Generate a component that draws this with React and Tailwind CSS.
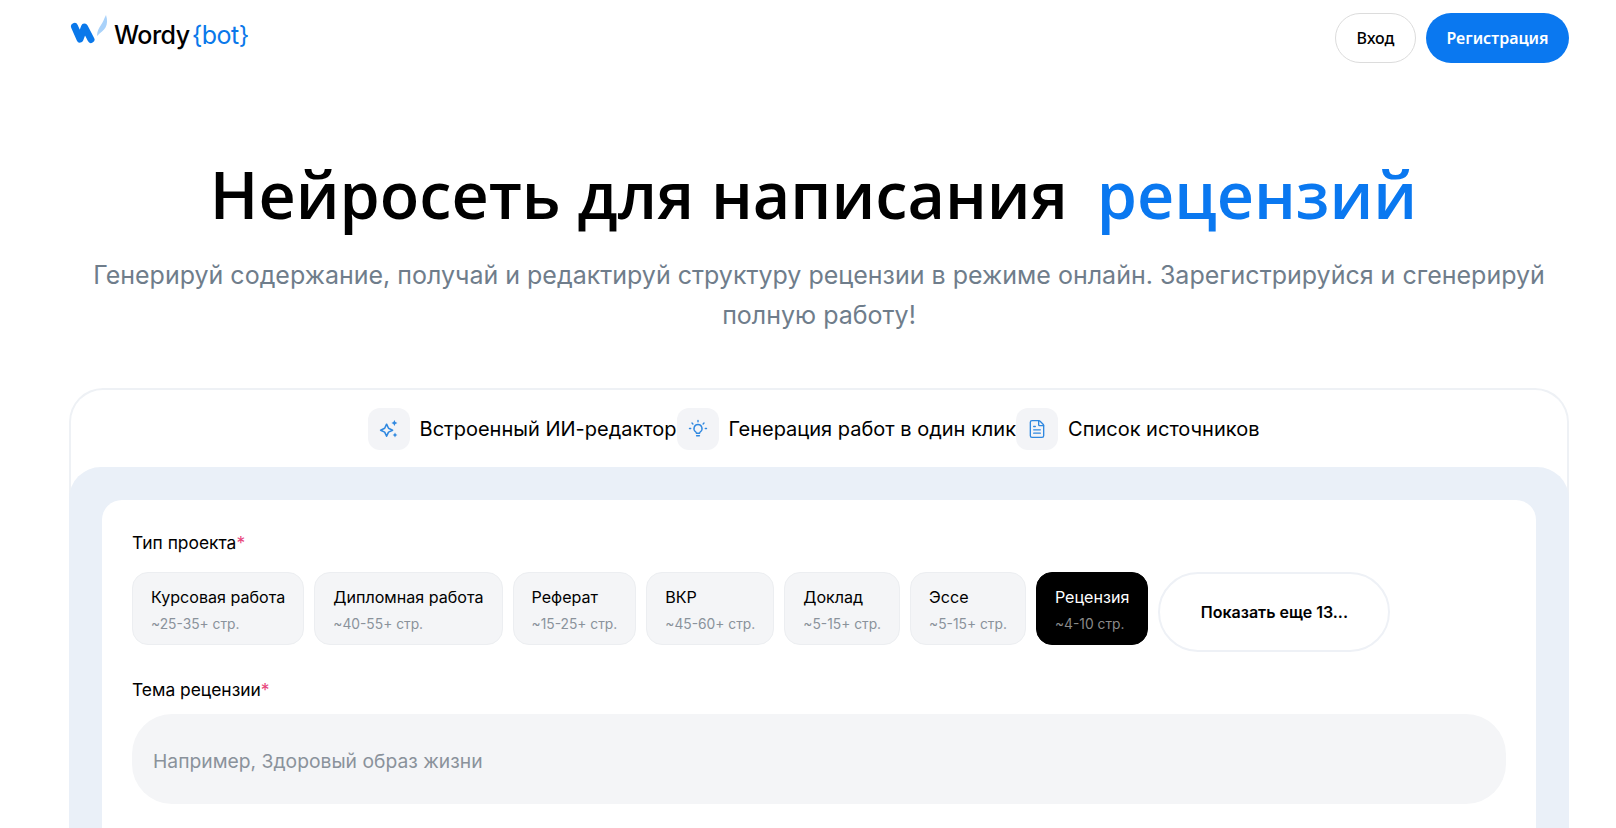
import { FileText } from 'lucide-react'

const PROJECT_TYPES = [
  { name: 'Курсовая работа', pages: '~25-35+ стр.' },
  { name: 'Дипломная работа', pages: '~40-55+ стр.' },
  { name: 'Реферат', pages: '~15-25+ стр.' },
  { name: 'ВКР', pages: '~45-60+ стр.' },
  { name: 'Доклад', pages: '~5-15+ стр.' },
  { name: 'Эссе', pages: '~5-15+ стр.' },
  { name: 'Рецензия', pages: '~4-10 стр.', active: true },
]

function SparkIcon() {
  return (
    <svg width="24" height="24" viewBox="0 0 20 20" fill="none" className="text-[#2f88e0]">
      <path d="M8 6l1.600 3.400L13 11l-3.400 1.600L8 16l-1.600-3.400L3 11l3.400-1.600L8 6z" stroke="currentColor" strokeWidth="1.3" strokeLinejoin="round" />
      <path d="M14.500 2.500l.8 1.700 1.700.8-1.700.8-.8 1.700-.8-1.700-1.700-.8 1.700-.8.8-1.700z" fill="currentColor" />
      <path d="M15 13l.7 1.300 1.300.7-1.300.7L15 17l-.7-1.300-1.300-.7 1.300-.7.7-1.300z" fill="currentColor" />
    </svg>
  )
}

function BulbIcon() {
  return (
    <svg width="20" height="20" viewBox="0 0 20 20" fill="none" stroke="currentColor" strokeWidth="1.4" strokeLinecap="round" className="text-[#2f88e0]">
      <path d="M10 5.500a4 4 0 0 0-2.400 7.200c.5.4.8.9.8 1.500h3.200c0-.6.3-1.100.8-1.500A4 4 0 0 0 10 5.500z" strokeLinejoin="round" />
      <path d="M8.600 16.800h2.800" />
      <path d="M10 1.500v1.200M4 4l.9.9M16 4l-.9.9M1.500 9.500h1.200M17.300 9.500h1.200" />
    </svg>
  )
}

function DocIcon() {
  return <FileText size={20} strokeWidth={1.6} className="text-[#2f88e0]" />
}

const FEATURES = [
  { icon: SparkIcon, label: 'Встроенный ИИ-редактор' },
  { icon: BulbIcon, label: 'Генерация работ в один клик' },
  { icon: DocIcon, label: 'Список источников' },
]

function Logo() {
  return (
    <svg width="38" height="32" viewBox="0 0 38 32" fill="none">
      <path d="M4.500 13.500L10 26l4.500-12L21 26.500" stroke="#0a78ea" strokeWidth="7" strokeLinecap="round" strokeLinejoin="round" />
      <path d="M27 23c0-5 2-8 4-11 2-3 3-6 5-10 1.500 5 1.500 9-.5 12.500-1.500 2.500-5 5-8.500 8.500z" fill="#a9d2fa" />
    </svg>
  )
}

export default function App() {
  return (
    <div className="h-[828px] overflow-hidden bg-white font-['Inter',sans-serif] text-black">
      <header className="flex h-[76px] items-start justify-between pl-[70px] pr-[47px] pt-[13px]">
        <div className="flex items-start gap-[6px]">
          <Logo />
          <span className="flex gap-[2px] pt-[1px] text-[25px] leading-[42px] tracking-[-0.5px]">
            <span className="font-medium">Wordy</span>
            <span className="text-[#0a78ea]">{'{bot}'}</span>
          </span>
        </div>
        <div className="flex gap-[10px]">
          <button className="h-[50px] w-[81px] rounded-full border border-[#dcdcdc] bg-white font-['Noto_Sans',sans-serif] text-[16px] font-medium">Вход</button>
          <button className="h-[50px] w-[143px] rounded-full bg-[#0a78f0] font-['Noto_Sans',sans-serif] text-[16px] font-semibold text-white">Регистрация</button>
        </div>
      </header>

      <main className="pl-[69px] pr-[47px]">
        <h1 className="mt-[76px] pr-[11px] text-center font-['Open_Sans',sans-serif] text-[64.7px] font-semibold leading-[84px]">
          Нейросеть для написания <span className="ml-[12px] text-[#0a78f0]">рецензий</span>
        </h1>
        <p className="mx-auto mt-[19px] max-w-[1480px] text-center text-[25px] leading-[40px] text-[#6f7d8b]">
          Генерируй содержание, получай и редактируй структуру рецензии в режиме онлайн. Зарегистрируйся и сгенерируй полную работу!
        </p>

        <section className="mt-[53px] rounded-t-[34px] border-2 border-b-0 border-[#eef1f5]">
          <div className="flex h-[77px] items-center justify-center pr-[11px]">
            {FEATURES.map(({ icon: Icon, label }) => (
              <div key={label} className="flex items-center gap-[10px]">
                <span className="flex size-[42px] items-center justify-center rounded-[12px] bg-[#f3f4f7]">
                  <Icon />
                </span>
                <span className="text-[20px] leading-[28px]">{label}</span>
              </div>
            ))}
          </div>
          <div className="-mx-[2px] rounded-t-[32px] bg-[#eaf0f8] px-[33px] pt-[33px]">
            <div className="rounded-t-[20px] bg-white px-[30px] pt-[31px] pb-[30px]">
              <label className="block text-[17.4px] leading-[24px]">
                Тип проекта<span className="text-[#e8467c]">*</span>
              </label>
              <div className="mt-[17px] flex items-start gap-[10px]">
                {PROJECT_TYPES.map((type) => (
                  <button
                    key={type.name}
                    className={
                      type.active
                        ? 'flex h-[73px] flex-col justify-center rounded-[16px] border border-black bg-black px-[18px] pt-[2px] text-left text-white'
                        : 'flex h-[73px] flex-col justify-center rounded-[16px] border border-[#eceef1] bg-[#f4f5f7] px-[18px] pt-[2px] text-left'
                    }
                  >
                    <span className="text-[16.1px] leading-[24px]">{type.name}</span>
                    <span className={type.active ? 'mt-[5px] text-[13.8px] leading-[20px] text-[#8a8a8a]' : 'mt-[5px] text-[13.8px] leading-[20px] text-[#8a929b]'}>
                      {type.pages}
                    </span>
                  </button>
                ))}
                <button className="h-[80px] w-[232px] rounded-full border-2 border-[#eef1f6] bg-white text-[16px] font-semibold">Показать еще 13...</button>
              </div>
              <label className="mt-[26px] block text-[17.4px] leading-[24px]">
                Тема рецензии<span className="text-[#e8467c]">*</span>
              </label>
              <input
                placeholder="Например, Здоровый образ жизни"
                className="mt-[12px] h-[90px] w-full rounded-[40px] bg-[#f4f5f7] px-[21px] pt-[4px] text-[19.3px] outline-none placeholder:text-[#8a929b]"
              />
            </div>
          </div>
        </section>
      </main>
    </div>
  )
}
